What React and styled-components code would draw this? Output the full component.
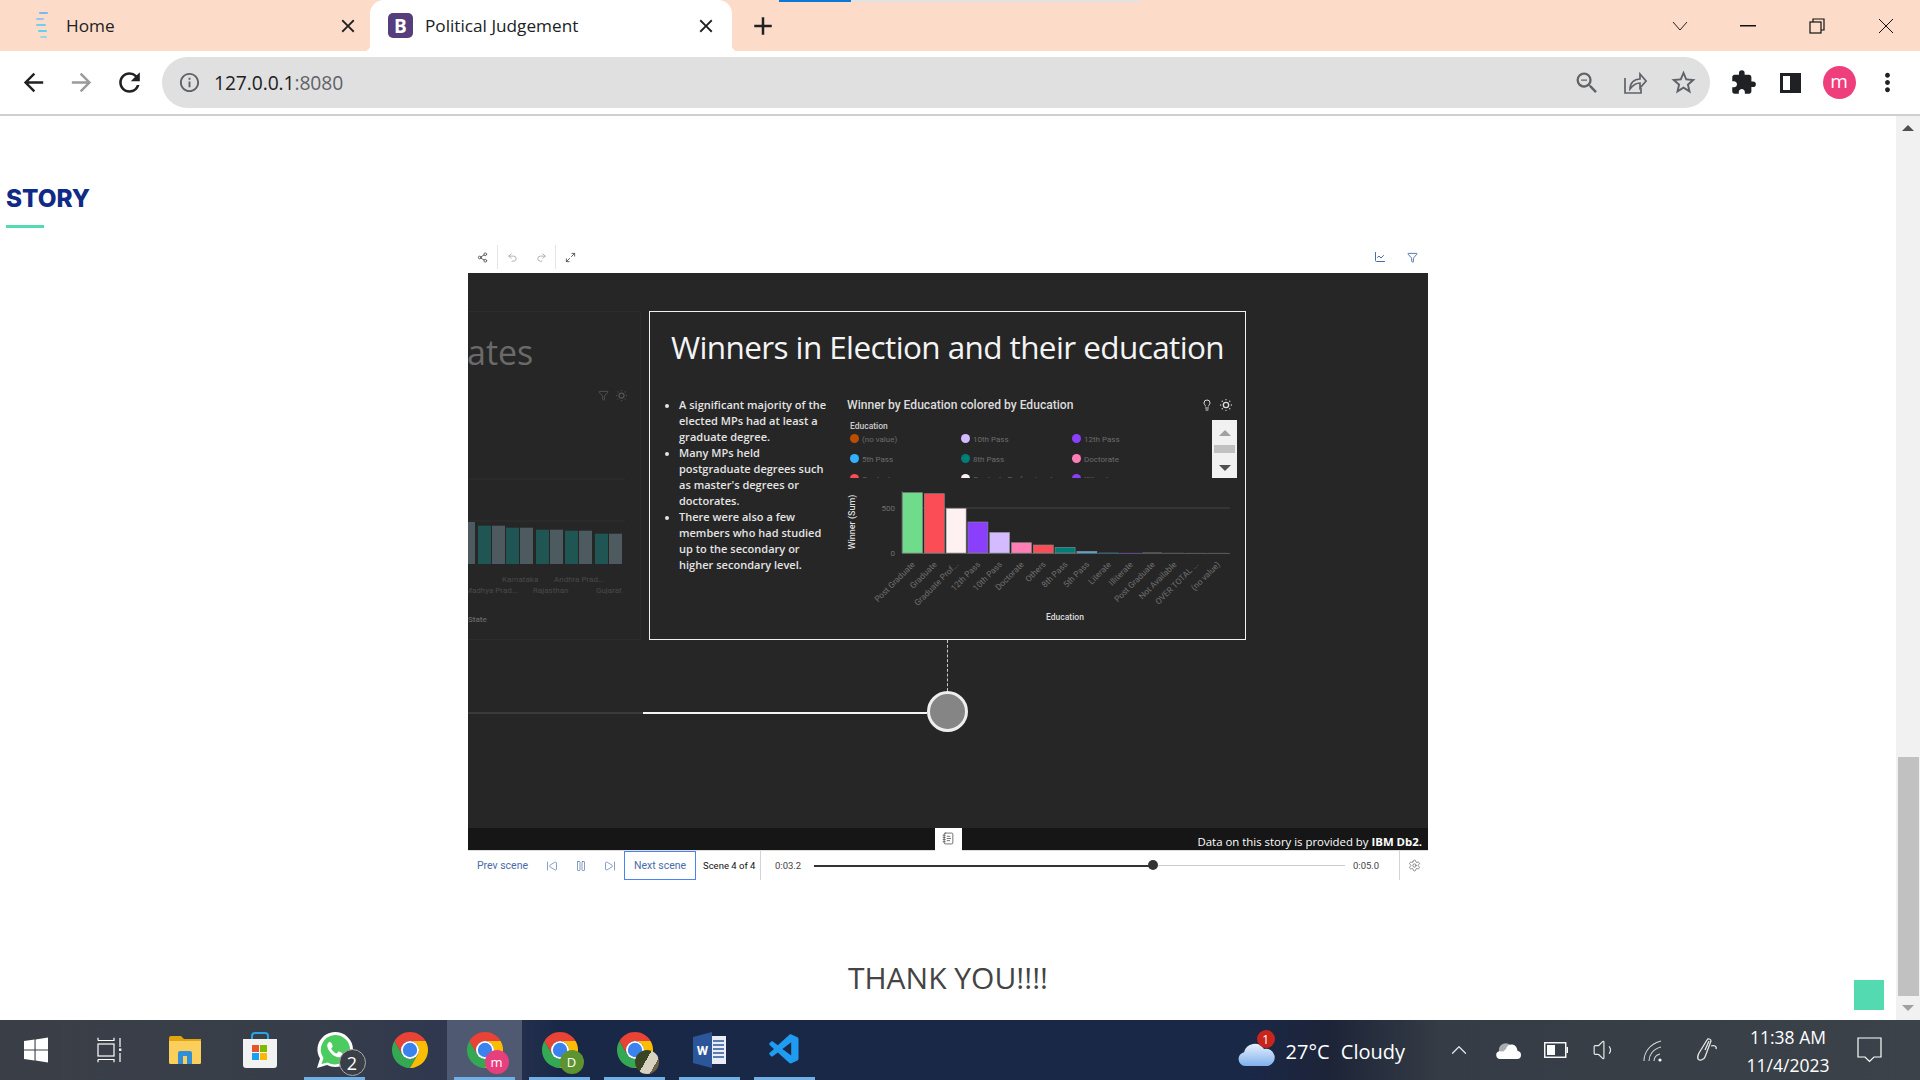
import React from "react";
import styled, { createGlobalStyle } from "styled-components";
import {
  Share2,
  Undo2,
  Redo2,
  Maximize2,
  ChartLine,
  Funnel,
  Lightbulb,
  SunDim,
  NotebookText,
  SkipBack,
  SkipForward,
  Pause,
  Settings,
  ChevronUp,
  Volume1,
} from "lucide-react";
import {
  MdAdd,
  MdArrowBack,
  MdArrowForward,
  MdClose,
  MdExtension,
  MdInfoOutline,
  MdMoreVert,
  MdRefresh,
  MdStarBorder,
  MdZoomOut,
} from "react-icons/md";
import { VscVscode } from "react-icons/vsc";

const GlobalStyle = createGlobalStyle`
  html, body {
    margin: 0;
    padding: 0;
    background: #fff;
    overflow: hidden;
  }
  * { box-sizing: border-box; }
`;

const Screen = styled.div`
  width: 1920px;
  height: 1080px;
  display: flex;
  flex-direction: column;
  font-family: "Open Sans", "Liberation Sans", sans-serif;
  overflow: hidden;
`;

/* browser chrome */
const TabStrip = styled.div`
  height: 51px;
  flex: none;
  display: flex;
  align-items: stretch;
  background: #fcdcc8;
  position: relative;
`;

const LoadBar = styled.div`
  position: absolute;
  top: 0;
  left: 779px;
  width: 362px;
  height: 2px;
  background: linear-gradient(90deg, #0a78d4 0 72px, #e2e2e2 72px);
`;

const Tab = styled.div`
  width: ${(p) => (p.$active ? "362px" : "370px")};
  position: relative;
  display: flex;
  align-items: center;
  gap: ${(p) => (p.$active ? "12px" : "16px")};
  padding: ${(p) => (p.$active ? "0 15px 0 18px" : "0 11px 0 34px")};
  background: ${(p) => (p.$active ? "#fff" : "transparent")};
  border-radius: 14px 14px 0 0;
  font-size: 17.2px;
  color: #202124;

  &::before,
  &::after {
    content: "";
    display: ${(p) => (p.$active ? "block" : "none")};
    position: absolute;
    bottom: 0;
    width: 6px;
    height: 6px;
  }
  &::before {
    left: -6px;
    background: radial-gradient(circle at 0 0, transparent 6px, #fff 6.5px);
  }
  &::after {
    right: -6px;
    background: radial-gradient(circle at 100% 0, transparent 6px, #fff 6.5px);
  }
`;

const TabLabel = styled.span`
  flex: 1;
  white-space: nowrap;
`;

const Favicon = styled.div`
  width: 25px;
  height: 25px;
  border-radius: 5px;
  background: #563d7c;
  color: #fff;
  font-weight: 700;
  font-size: 19px;
  display: flex;
  align-items: center;
  justify-content: center;
`;

const NewTab = styled.div`
  width: 62px;
  display: flex;
  align-items: center;
  justify-content: center;
  color: #202124;
`;

const WindowButtons = styled.div`
  margin-left: auto;
  display: flex;
  align-items: center;
`;

const WindowButton = styled.div`
  width: 68.7px;
  height: 42px;
  display: flex;
  align-items: center;
  justify-content: center;
`;

const Toolbar = styled.div`
  height: 65px;
  flex: none;
  display: flex;
  align-items: flex-start;
  padding-top: 6px;
  background: #fff;
  border-bottom: 2px solid #d0d0d0;
`;

const NavButton = styled.div`
  width: 48px;
  height: 51px;
  display: flex;
  align-items: center;
  justify-content: center;
  color: ${(p) => p.$color || "#202124"};
`;

const NavGroup = styled.div`
  width: 162px;
  display: flex;
  padding-left: 9px;
`;

const AddressBar = styled.div`
  width: 1548px;
  height: 51px;
  margin-right: 9px;
  border-radius: 26px;
  background: #e0e0e0;
  display: flex;
  align-items: center;
  padding: 0 3px 0 16px;
  color: #5f6368;
`;

const Url = styled.div`
  margin-left: 13px;
  flex: 1;
  font-size: 19.3px;
  letter-spacing: -0.1px;
  color: #202124;
  span { color: #5f6368; }
`;

const AddressAction = styled.div`
  width: 48px;
  display: flex;
  justify-content: center;
`;

const Avatar = styled.div`
  width: 33px;
  height: 33px;
  border-radius: 50%;
  background: #ee3f7c;
  color: #fff;
  font-size: 19px;
  display: flex;
  align-items: center;
  justify-content: center;
  padding-bottom: 3px;
`;

/* page */
const Main = styled.div`
  flex: 1;
  min-height: 0;
  display: flex;
  position: relative;
  background: #fff;
`;

const Content = styled.div`
  flex: 1;
  min-width: 0;
  padding-top: 67px;
`;

const Heading = styled.h2`
  margin: 0;
  padding-left: 6px;
  font-family: Inter, "Open Sans", sans-serif;
  font-size: 24.3px;
  line-height: 30px;
  font-weight: 800;
  color: #0f2a87;
`;

const HeadingRule = styled.div`
  width: 38px;
  height: 3px;
  margin: 12px 0 17px 6px;
  background: #53dab0;
`;

const StoryWidget = styled.div`
  width: 960px;
  margin: 0 auto;
`;

const StoryBar = styled.div`
  height: 28px;
  display: flex;
  align-items: stretch;
  padding-bottom: 4px;
  color: #4a6ba8;
`;

const BarIcon = styled.div`
  width: ${(p) => p.$w || 29}px;
  display: flex;
  align-items: center;
  justify-content: center;
  color: ${(p) => p.$color || "#555"};
  border-right: ${(p) => (p.$divider ? "1px solid #e4e4e4" : "none")};
`;

const BarSpacer = styled.div`
  flex: 1;
`;

const Stage = styled.div`
  height: 577px;
  background: #262626;
  display: flex;
  flex-direction: column;
  color: #eee;
  font-family: "Roboto", "Liberation Sans", sans-serif;
`;

const SceneRow = styled.div`
  display: flex;
  gap: 8px;
  padding-top: 38px;
  height: 367px;
`;

const FadedScene = styled.div`
  width: 173px;
  height: 329px;
  flex: none;
  overflow: hidden;
  border: 1px solid #2c2c2c;
  border-left: none;
  color: #6a6a6a;
`;

const FadedTitle = styled.div`
  margin: 19px 0 0 -1px;
  font-family: "Open Sans", sans-serif;
  font-size: 34px;
  line-height: 42px;
`;

const FadedIcons = styled.div`
  display: flex;
  justify-content: flex-end;
  align-items: center;
  gap: 5px;
  height: 16px;
  padding-right: 11px;
  margin-top: 14px;
  color: #555;
`;

const Frame = styled.div`
  width: 597px;
  height: 329px;
  flex: none;
  border: 1px solid #f0f0f0;
  display: flex;
  flex-direction: column;
`;

const SlideTitle = styled.h1`
  margin: 0;
  height: 85px;
  padding-top: 13px;
  text-align: center;
  font-family: "Open Sans", sans-serif;
  font-size: 31.5px;
  line-height: 43px;
  font-weight: 400;
  letter-spacing: -0.6px;
  color: #f4f4f4;
  white-space: nowrap;
`;

const SlideBody = styled.div`
  display: flex;
  flex: 1;
`;

const Bullets = styled.ul`
  width: 197px;
  flex: none;
  margin: 0;
  padding: 0 0 0 29px;
  font-family: "Open Sans", sans-serif;
  font-size: 11px;
  line-height: 16px;
  font-weight: 600;
  letter-spacing: 0.02px;
  color: #e4e4e4;
  white-space: nowrap;
  li::marker { font-size: 10px; }
`;

const ChartColumn = styled.div`
  flex: 1;
  min-width: 0;
  position: relative;
`;

const ChartHeader = styled.div`
  height: 16px;
  display: flex;
  align-items: center;
  justify-content: space-between;
  padding-right: 11px;
  font-size: 12.1px;
  font-weight: 500;
  color: #dcdcdc;
  white-space: nowrap;
`;

const ChartTools = styled.div`
  display: flex;
  align-items: center;
  gap: 5px;
  color: #ddd;
`;

const LegendArea = styled.div`
  height: 58px;
  margin: 7px 8px 0 3px;
  display: flex;
  overflow: hidden;
`;

const LegendBody = styled.div`
  flex: 1;
  padding-top: 1px;
`;

const LegendTitle = styled.div`
  font-size: 8.5px;
  line-height: 11px;
  font-weight: 500;
  color: #ccc;
  height: 9px;
`;

const LegendGrid = styled.div`
  display: grid;
  grid-template-columns: repeat(3, 111px);
  grid-auto-rows: 19.7px;
  align-items: center;
`;

const LegendItem = styled.div`
  display: flex;
  align-items: center;
  gap: 3px;
  font-size: 8px;
  color: #6c6c6c;
  white-space: nowrap;
`;

const LegendDot = styled.span`
  width: 9px;
  height: 9px;
  border-radius: 50%;
  background: ${(p) => p.$color};
  position: relative;
  top: -1px;
`;

const LegendScroll = styled.div`
  width: 25px;
  flex: none;
  background: #f1f1f1;
  display: flex;
  flex-direction: column;
  align-items: center;
  padding-top: 10px;
`;

const ScrollArrow = styled.div`
  width: 0;
  height: 0;
  border-left: 6px solid transparent;
  border-right: 6px solid transparent;
  border-bottom: ${(p) => (p.$down ? "none" : `6px solid ${p.$color}`)};
  border-top: ${(p) => (p.$down ? `6px solid ${p.$color}` : "none")};
`;

const ScrollNub = styled.div`
  width: 21px;
  height: 8px;
  margin: 9px 0 12px;
  background: #c1c1c1;
`;

const Connector = styled.div`
  height: 51px;
  margin-left: 479px;
  border-left: 1px dashed #c8c8c8;
`;

const TimelineRow = styled.div`
  display: flex;
  align-items: center;
  height: 41px;
`;

const TimelineSegment = styled.div`
  width: ${(p) => p.$w}px;
  height: 2px;
  margin-top: 3px;
  background: ${(p) => p.$color};
`;

const TimelineNode = styled.div`
  width: 41px;
  height: 41px;
  border-radius: 50%;
  border: 3px solid #eee;
  background: #858585;
`;

const StageFooter = styled.div`
  margin-top: auto;
  height: 22px;
  background: #161616;
  display: grid;
  grid-template-columns: 1fr 27px 1fr;
`;

const NoteButton = styled.div`
  grid-column: 2;
  background: #fff;
  color: #555;
  display: flex;
  align-items: center;
  justify-content: center;
  padding-bottom: 4px;
`;

const Credit = styled.div`
  grid-column: 3;
  text-align: right;
  padding: 3px 6px 0 0;
  font-family: "Open Sans", sans-serif;
  font-size: 11.4px;
  line-height: 21px;
  color: #fff;
  white-space: nowrap;
  b { font-weight: 700; }
`;

const Controls = styled.div`
  height: 30px;
  display: flex;
  align-items: stretch;
  border-top: 1px solid #ddd;
  font-family: "Roboto", "Liberation Sans", sans-serif;
  font-size: 10.5px;
`;

const SceneLink = styled.div`
  display: flex;
  align-items: center;
  justify-content: center;
  width: ${(p) => p.$w}px;
  color: #4a6ba8;
  border: ${(p) => (p.$focus ? "1px solid #4a84f0" : "1px solid transparent")};
`;

const SceneCount = styled.div`
  width: 64px;
  padding-left: 7px;
  display: flex;
  align-items: center;
  font-size: 9.5px;
  color: #111;
  white-space: nowrap;
`;

const TimeStamp = styled.div`
  width: ${(p) => p.$w}px;
  flex: none;
  display: flex;
  align-items: center;
  padding-left: ${(p) => p.$pad}px;
  border-left: ${(p) => (p.$divider ? "1px solid #d4d4d4" : "none")};
  font-size: 9.5px;
  color: #444;
`;

const SliderTrack = styled.div`
  flex: 1;
  display: flex;
  align-items: center;
`;

const Slider = styled.div`
  width: 100%;
  height: 1px;
  background: #ccc;
  position: relative;
`;

const SliderFill = styled.div`
  position: absolute;
  left: 0;
  top: -0.5px;
  height: 2px;
  background: #333;
`;

const SliderKnob = styled.div`
  position: absolute;
  top: -5px;
  width: 10px;
  height: 10px;
  margin-left: -5px;
  border-radius: 50%;
  background: #333;
`;

const GearCell = styled.div`
  width: 29px;
  border-left: 1px solid #d4d4d4;
  display: flex;
  align-items: center;
  justify-content: center;
  color: #666;
`;

const ThankYou = styled.div`
  margin-top: 80px;
  text-align: center;
  font-size: 30px;
  line-height: 36px;
  color: #444;
`;

const BackToTop = styled.div`
  position: absolute;
  right: 36px;
  bottom: 10px;
  width: 30px;
  height: 30px;
  background: #53dab0;
`;

const PageScroll = styled.div`
  width: 24px;
  flex: none;
  background: #f1f1f1;
  display: flex;
  flex-direction: column;
  align-items: center;
`;

const PageArrow = styled.div`
  height: 24px;
  flex: none;
  display: flex;
  align-items: center;
  justify-content: center;
`;

const PageThumb = styled.div`
  width: 21px;
  height: 239px;
  margin-top: auto;
  background: #c1c1c1;
`;

/* taskbar */
const Taskbar = styled.div`
  height: 60px;
  flex: none;
  display: flex;
  align-items: stretch;
  background: linear-gradient(
    90deg,
    #3a3f47 0,
    #383e49 300px,
    #2c3650 480px,
    #1a2848 560px,
    #1a2848 1240px,
    #1d2438 1330px,
    #353c45 1440px,
    #3b4249 1920px
  );
  color: #fff;
`;

const TaskCell = styled.div`
  width: ${(p) => p.$w || 75}px;
  flex: none;
  display: flex;
  align-items: center;
  justify-content: center;
  position: relative;
  background: ${(p) => (p.$active ? "#4f5a72" : "transparent")};
  &::after {
    content: "";
    position: absolute;
    bottom: 0;
    left: 7px;
    right: 7px;
    height: 3px;
    background: #6fb0e6;
    display: ${(p) => (p.$open ? "block" : "none")};
  }
`;

const IconStack = styled.div`
  width: 36px;
  height: 36px;
  position: relative;
`;

const IconBadge = styled.div`
  position: absolute;
  right: ${(p) => p.$right ?? -4}px;
  bottom: ${(p) => p.$bottom ?? -4}px;
  width: ${(p) => p.$size || 24}px;
  height: ${(p) => p.$size || 24}px;
  border-radius: 50%;
  background: ${(p) => p.$color};
  border: ${(p) => (p.$ring ? "1px solid #aaa" : "none")};
  color: #fff;
  font-size: ${(p) => p.$font || 14}px;
  display: flex;
  align-items: center;
  justify-content: center;
`;

const Weather = styled.div`
  margin-left: auto;
  display: flex;
  align-items: center;
  gap: 11px;
  padding-top: 2px;
  font-size: 20px;
  white-space: nowrap;
  word-spacing: 6px;
`;

const CloudIcon = styled.div`
  width: 37px;
  height: 30px;
  position: relative;
`;

const WeatherBadge = styled.div`
  position: absolute;
  top: -6px;
  right: 0;
  width: 18px;
  height: 18px;
  border-radius: 50%;
  background: #c8261c;
  font-size: 12px;
  color: #fff;
  display: flex;
  align-items: center;
  justify-content: center;
`;

const Tray = styled.div`
  display: flex;
  align-items: center;
  margin-left: 30px;
`;

const TrayIcon = styled.div`
  width: 48.5px;
  display: flex;
  justify-content: center;
  padding-left: ${(p) => p.$shift || 0}px;
`;

const Clock = styled.div`
  width: 112px;
  padding-top: 2px;
  margin: auto 0 auto 6px;
  text-align: center;
  font-size: 17.5px;
  line-height: 28px;
  white-space: nowrap;
`;

const NotifyCell = styled.div`
  width: 76px;
  display: flex;
  align-items: center;
  padding-left: 13px;
`;

const COLORS = {
  green: "#6fdc8c",
  red: "#fa4d56",
  blush: "#fff1f1",
  violet: "#8a3ffc",
  lilac: "#d4bbff",
  pink: "#ff7eb6",
  teal: "#007d79",
  blue: "#33b1ff",
  orange: "#ba4e00",
};

const LEGEND = [
  ["(no value)", COLORS.orange],
  ["10th Pass", COLORS.lilac],
  ["12th Pass", COLORS.violet],
  ["5th Pass", COLORS.blue],
  ["8th Pass", COLORS.teal],
  ["Doctorate", COLORS.pink],
  ["Graduate", COLORS.red],
  ["Graduate Professional", COLORS.blush],
  ["Illiterate", COLORS.violet],
];

const EDUCATION_BARS = [
  ["Post Graduate", 493.7, COLORS.green],
  ["Graduate", 494.7, COLORS.red],
  ["Graduate Prof...", 509.3, COLORS.blush],
  ["12th Pass", 523, COLORS.violet],
  ["10th Pass", 533.3, COLORS.lilac],
  ["Doctorate", 543.7, COLORS.pink],
  ["Others", 546, COLORS.red],
  ["8th Pass", 548.3, COLORS.teal],
  ["5th Pass", 552.3, COLORS.blue],
  ["Literate", 553, "#1c4e68"],
  ["Illiterate", 553.4, "#491d8b"],
  ["Post Graduate", 553.4, "#6f6f6f"],
  ["Not Available", 553.7, "#555"],
  ["OVER TOTAL ...", 553.8, "#555"],
  ["(no value)", 553.8, "#555"],
];

// tops of the grey/teal pairs in the scene that is sliding out
const FADED_BARS = [
  [478, 524.7],
  [506, 526.7],
  [536, 528.7],
  [565, 529.7],
  [595, 532.7],
];

const PLAYED = 0.638;

function EducationChart() {
  return (
    <svg width="395" height="155" viewBox="845 478 395 155" style={{ display: "block", margin: "-1px 0 0 -1px" }}>
      <line x1="901" x2="1229" y1="509" y2="509" stroke="#444" />
      <line x1="901" x2="1229" y1="554.5" y2="554.5" stroke="#555" />
      <line x1="901" x2="901" y1="492" y2="554" stroke="#555" />
      {EDUCATION_BARS.map(([label, top, fill], i) => {
        const x = 901.5 + i * 21.8;
        const tickX = x + 13;
        return (
          <g key={i}>
            <rect x={x} y={top} width="20" height={554 - top} fill={fill} stroke={top < 553 ? "#8a8a8a" : "none"} strokeWidth="0.6" />
            <text
              x={tickX}
              y="566"
              textAnchor="end"
              transform={`rotate(-45 ${tickX} 566)`}
              fontSize="8.4"
              fontFamily="Roboto, sans-serif"
              fill="#707070"
            >
              {label}
            </text>
          </g>
        );
      })}
      <text x="894" y="512" textAnchor="end" fontSize="8" fill="#707070" fontFamily="Roboto, sans-serif">500</text>
      <text x="894" y="557" textAnchor="end" fontSize="8" fill="#707070" fontFamily="Roboto, sans-serif">0</text>
      <text x="1064" y="621" textAnchor="middle" fontSize="8.5" fontWeight="500" fill="#ddd" fontFamily="Roboto, sans-serif">Education</text>
      <text
        x="854"
        y="523"
        textAnchor="middle"
        transform="rotate(-90 854 523)"
        fontSize="9"
        fontWeight="500"
        fill="#ddd"
        fontFamily="Roboto, sans-serif"
      >
        Winner (Sum)
      </text>
    </svg>
  );
}

function FadedChart() {
  return (
    <svg width="173" height="165" viewBox="468 470 173 165" style={{ display: "block", marginTop: 68 }}>
      <line x1="468" x2="625" y1="478" y2="478" stroke="#2e2e2e" />
      <line x1="468" x2="625" y1="520" y2="520" stroke="#2e2e2e" />
      <rect x="465" y="521" width="10" height="42" fill="#4d5a60" />
      {FADED_BARS.map(([x, top]) => (
        <g key={x}>
          <rect x={x} y={top} width="13" height={563 - top} fill="#1f5654" />
          <rect x={x + 14} y={top} width="13" height={563 - top} fill="#4d5a60" />
        </g>
      ))}
      <g fontSize="8" fill="#4a4a4a" fontFamily="Roboto, sans-serif">
        <text x="502" y="581">Karnataka</text>
        <text x="554" y="581">Andhra Prad...</text>
        <text x="465" y="592">Madhya Prad...</text>
        <text x="533" y="592">Rajasthan</text>
        <text x="596" y="592">Gujarat</text>
      </g>
      <text x="468" y="621" fontSize="8" fontWeight="500" fill="#666" fontFamily="Roboto, sans-serif">State</text>
    </svg>
  );
}

function ChromeLogo({ size = 36 }) {
  return (
    <svg width={size} height={size} viewBox="4 4 40 40">
      <path d="M6.68 14A20 20 0 0 1 41.32 14H24a10 10 0 0 0-8.66 15z" fill="#ea4335" />
      <path d="M6.68 14L15.34 29A10 10 0 0 0 32.66 29L24 44A20 20 0 0 1 6.68 14z" fill="#34a853" />
      <path d="M41.32 14H24a10 10 0 0 1 8.66 15L24 44A20 20 0 0 0 41.32 14z" fill="#fbbc04" />
      <circle cx="24" cy="24" r="10" fill="#fff" />
      <circle cx="24" cy="24" r="8" fill="#3a82ee" />
    </svg>
  );
}

function WindowsLogo() {
  return (
    <svg width="26" height="26" viewBox="0 0 26 26" fill="#fff">
      <polygon points="1,4 11.5,2.6 11.5,12.4 1,12.4" />
      <polygon points="12.6,2.4 25,0.6 25,12.4 12.6,12.4" />
      <polygon points="1,13.6 11.5,13.6 11.5,23.4 1,22" />
      <polygon points="12.6,13.6 25,13.6 25,25.4 12.6,23.6" />
    </svg>
  );
}

function TaskViewIcon() {
  return (
    <svg width="26" height="26" viewBox="0 0 26 26" fill="none" stroke="#fff" strokeWidth="1.2">
      <path d="M1 3.5V.8M1 3.5H17V.8M1 22.5v2.7M1 22.5H17v2.7" />
      <rect x="1" y="7" width="16" height="12" />
      <path d="M23 1v9M23 16v9" />
      <rect x="22" y="11.5" width="2.4" height="2.4" fill="#fff" stroke="none" />
    </svg>
  );
}

function FolderIcon() {
  return (
    <svg width="34" height="30" viewBox="0 0 34 30">
      <path d="M1 3a2 2 0 0 1 2-2h10l3 3H1z" fill="#e2a510" />
      <rect x="1" y="4" width="32" height="25" rx="1.5" fill="#fbcf5b" />
      <rect x="1" y="4" width="32" height="2" fill="#e2a510" />
      <path d="M10 29V18a2 2 0 0 1 2-2h10a2 2 0 0 1 2 2v11h-5v-8h-4v8z" fill="#2f8fd8" />
    </svg>
  );
}

function StoreIcon() {
  return (
    <svg width="36" height="36" viewBox="0 0 36 36">
      <path d="M10 8V4a3 3 0 0 1 3-3h10a3 3 0 0 1 3 3v4" fill="none" stroke="#27a4e8" strokeWidth="2" />
      <path d="M1 7h34v26a3 3 0 0 1-3 3H4a3 3 0 0 1-3-3z" fill="#f2f2f2" />
      <rect x="10" y="13" width="7" height="7" fill="#e8532a" />
      <rect x="18" y="13" width="7" height="7" fill="#7fba00" />
      <rect x="10" y="21" width="7" height="7" fill="#19a0ee" />
      <rect x="18" y="21" width="7" height="7" fill="#fbb900" />
    </svg>
  );
}

function WhatsAppIcon() {
  return (
    <svg width="36" height="36" viewBox="0 0 36 36">
      <path d="M18 0a18 17.5 0 0 1 0 35 18 18 0 0 1-8-2L0 36l3-9.5A18 17.5 0 0 1 18 0z" fill="#fff" />
      <path d="M18 3a15 14.7 0 0 1 0 29.4 15 15 0 0 1-7.5-2L4.5 32l2-6A15 14.7 0 0 1 18 3z" fill="#4ccb60" />
      <path
        d="M12.6 9.8c-1 .3-2.6 2-2.4 4.2.3 3 2.6 6.3 5.1 8.4 2.6 2.1 5.6 3.3 7.5 2.8 1.7-.5 3-1.9 3-3.3 0-.7-3.6-2.5-4.3-2.3-.6.2-1.2 1.8-1.8 1.9-1.4.1-5.2-3.4-5.4-5 0-.6 1.3-1.4 1.4-2 .1-.7-1.5-4.9-3.1-4.7z"
        fill="#fff"
      />
    </svg>
  );
}

function WordIcon() {
  return (
    <svg width="34" height="36" viewBox="0 0 34 36">
      <rect x="12" y="4" width="21" height="28" fill="#e8edf6" />
      <g stroke="#2b579a" strokeWidth="1.4">
        <path d="M20 9h11M20 13h11M20 17h11M20 21h11M20 25h11" />
      </g>
      <path d="M0 5l19-5v36L0 31z" fill="#2b579a" />
      <text x="9.5" y="23" textAnchor="middle" fontSize="13" fontWeight="700" fill="#fff" fontFamily="Roboto, sans-serif">W</text>
    </svg>
  );
}

function OneDriveIcon() {
  return (
    <svg width="26" height="18" viewBox="0 0 26 18">
      <path d="M4 11a7 7 0 0 1 13-5 5 5 0 0 1 6 4H10z" fill="#a8adb2" />
      <path d="M5 18a4 4 0 0 1-1-7.8h4.5L11 8a5 5 0 0 1 11 2 4 4 0 0 1 0 8z" fill="#fff" />
    </svg>
  );
}

function BatteryIcon() {
  return (
    <svg width="24" height="18" viewBox="0 0 24 18" fill="none">
      <rect x="0.75" y="1.75" width="21" height="14.5" stroke="#fff" strokeWidth="1.4" />
      <rect x="3" y="4" width="8" height="10" fill="#fff" />
      <rect x="22.5" y="6" width="1.5" height="6" fill="#fff" />
    </svg>
  );
}

function SignalIcon() {
  return (
    <svg width="20" height="26" viewBox="0 0 20 26" fill="none" stroke="#d5d8da" strokeWidth="1.1">
      <path d="M1 24C1 15 7 7 18 4" />
      <path d="M6 24C6 18 10 12 18 10" />
      <path d="M11 24c0-3 2-6 6-7" />
      <circle cx="17" cy="23" r="1.6" fill="#fff" stroke="none" />
    </svg>
  );
}

function PenIcon() {
  return (
    <svg width="22" height="26" viewBox="0 0 22 26" fill="none" stroke="#e8e8e8" strokeWidth="1.3">
      <path d="M3 16L11 3c1-2 4-1 4 1L9 20c-1 3-6 4-7 2s0-4 1-6z" />
      <path d="M9 13l4-9M15 9c3-1 6 0 5 3" />
    </svg>
  );
}

export default function App() {
  return (
    <Screen>
      <GlobalStyle />
      <TabStrip>
        <LoadBar />
        <Tab>
          <svg width="16" height="36" viewBox="0 0 16 36" fill="none" strokeWidth="2" strokeLinecap="round">
            <path d="M6 5h7" stroke="#7cb7ee" />
            <path d="M3 11h6" stroke="#93c8ec" />
            <path d="M3 17h8" stroke="#6ecfee" />
            <path d="M5 23h7" stroke="#5fd2ee" />
            <path d="M7 29h5" stroke="#9bd4ea" />
          </svg>
          <TabLabel>Home</TabLabel>
          <MdClose size={22} />
        </Tab>
        <Tab $active>
          <Favicon>B</Favicon>
          <TabLabel>Political Judgement</TabLabel>
          <MdClose size={22} />
        </Tab>
        <NewTab>
          <MdAdd size={30} />
        </NewTab>
        <WindowButtons>
          <WindowButton>
            <svg width="16" height="10" viewBox="0 0 16 10" fill="none" stroke="#222" strokeWidth="1">
              <path d="M1 1l7 8 7-8" />
            </svg>
          </WindowButton>
          <WindowButton>
            <svg width="16" height="2" viewBox="0 0 16 2">
              <rect width="16" height="1.5" fill="#111" />
            </svg>
          </WindowButton>
          <WindowButton>
            <svg width="16" height="16" viewBox="0 0 16 16" fill="none" stroke="#111" strokeWidth="1.2">
              <rect x="1" y="4" width="11" height="11" />
              <path d="M4 4V1h11v11h-3" />
            </svg>
          </WindowButton>
          <WindowButton>
            <svg width="16" height="16" viewBox="0 0 16 16" fill="none" stroke="#111" strokeWidth="1">
              <path d="M1 1l14 14M15 1L1 15" />
            </svg>
          </WindowButton>
        </WindowButtons>
      </TabStrip>

      <Toolbar>
        <NavGroup>
          <NavButton>
            <MdArrowBack size={29} />
          </NavButton>
          <NavButton $color="#9a9a9a">
            <MdArrowForward size={29} />
          </NavButton>
          <NavButton>
            <MdRefresh size={31} />
          </NavButton>
        </NavGroup>
        <AddressBar>
          <MdInfoOutline size={23} />
          <Url>
            127.0.0.1<span>:8080</span>
          </Url>
          <AddressAction>
            <MdZoomOut size={28} />
          </AddressAction>
          <AddressAction>
            <svg width="24" height="24" viewBox="0 0 24 24" fill="none" stroke="#5f6368" strokeWidth="1.7">
              <path d="M2 7v15h16v-5" />
              <path d="M7 18c0-6 4-10 10-10V3l6 7-6 7v-5c-4 0-7 2-10 6z" />
            </svg>
          </AddressAction>
          <AddressAction>
            <MdStarBorder size={29} />
          </AddressAction>
        </AddressBar>
        <NavButton>
          <MdExtension size={27} />
        </NavButton>
        <NavButton>
          <svg width="22" height="22" viewBox="0 0 22 22">
            <path d="M0 1h21v20H0z M3 4v14h7V4z" fill="#202124" fillRule="evenodd" />
          </svg>
        </NavButton>
        <NavButton>
          <Avatar>m</Avatar>
        </NavButton>
        <NavButton>
          <MdMoreVert size={29} />
        </NavButton>
      </Toolbar>

      <Main>
        <Content>
          <Heading>STORY</Heading>
          <HeadingRule />
          <StoryWidget>
            <StoryBar>
              <BarIcon $w={30} $divider>
                <Share2 size={11} />
              </BarIcon>
              <BarIcon $color="#aaa">
                <Undo2 size={11} />
              </BarIcon>
              <BarIcon $color="#aaa" $divider>
                <Redo2 size={11} />
              </BarIcon>
              <BarIcon>
                <Maximize2 size={11} />
              </BarIcon>
              <BarSpacer />
              <BarIcon $w={32} $color="#4a6ba8">
                <ChartLine size={12} />
              </BarIcon>
              <BarIcon $w={32} $color="#4a6ba8">
                <Funnel size={11} />
              </BarIcon>
            </StoryBar>
            <Stage>
              <SceneRow>
                <FadedScene>
                  <FadedTitle>ates</FadedTitle>
                  <FadedIcons>
                    <Funnel size={11} />
                    <SunDim size={15} />
                  </FadedIcons>
                  <FadedChart />
                </FadedScene>
                <Frame>
                  <SlideTitle>Winners in Election and their education</SlideTitle>
                  <SlideBody>
                    <Bullets>
                      <li>
                        A significant majority of the
                        <br />
                        elected MPs had at least a
                        <br />
                        graduate degree.
                      </li>
                      <li>
                        Many MPs held
                        <br />
                        postgraduate degrees such
                        <br />
                        as master's degrees or
                        <br />
                        doctorates.
                      </li>
                      <li>
                        There were also a few
                        <br />
                        members who had studied
                        <br />
                        up to the secondary or
                        <br />
                        higher secondary level.
                      </li>
                    </Bullets>
                    <ChartColumn>
                      <ChartHeader>
                        Winner by Education colored by Education
                        <ChartTools>
                          <Lightbulb size={12} />
                          <SunDim size={16} />
                        </ChartTools>
                      </ChartHeader>
                      <LegendArea>
                        <LegendBody>
                          <LegendTitle>Education</LegendTitle>
                          <LegendGrid>
                            {LEGEND.map(([label, color]) => (
                              <LegendItem key={label}>
                                <LegendDot $color={color} />
                                {label}
                              </LegendItem>
                            ))}
                          </LegendGrid>
                        </LegendBody>
                        <LegendScroll>
                          <ScrollArrow $color="#a0a0a0" />
                          <ScrollNub />
                          <ScrollArrow $down $color="#505050" />
                        </LegendScroll>
                      </LegendArea>
                      <EducationChart />
                    </ChartColumn>
                  </SlideBody>
                </Frame>
              </SceneRow>
              <Connector />
              <TimelineRow>
                <TimelineSegment $w={175} $color="#3a3a3a" />
                <TimelineSegment $w={284} $color="#f4f4f4" />
                <TimelineNode />
              </TimelineRow>
              <StageFooter>
                <NoteButton>
                  <NotebookText size={13} strokeWidth={1.5} />
                </NoteButton>
                <Credit>
                  Data on this story is provided by <b>IBM Db2.</b>
                </Credit>
              </StageFooter>
            </Stage>
            <Controls>
              <SceneLink $w={69}>Prev scene</SceneLink>
              <BarIcon $color="#4a6ba8">
                <SkipBack size={12} strokeWidth={1.3} />
              </BarIcon>
              <BarIcon $color="#4a6ba8">
                <Pause size={12} strokeWidth={1.3} />
              </BarIcon>
              <BarIcon $color="#4a6ba8">
                <SkipForward size={12} strokeWidth={1.3} />
              </BarIcon>
              <SceneLink $w={72} $focus>
                Next scene
              </SceneLink>
              <SceneCount>Scene 4 of 4</SceneCount>
              <TimeStamp $w={54} $pad={14} $divider>
                0:03.2
              </TimeStamp>
              <SliderTrack>
                <Slider>
                  <SliderFill style={{ width: `${PLAYED * 100}%` }} />
                  <SliderKnob style={{ left: `${PLAYED * 100}%` }} />
                </Slider>
              </SliderTrack>
              <TimeStamp $w={54} $pad={8}>
                0:05.0
              </TimeStamp>
              <GearCell>
                <Settings size={13} strokeWidth={1.4} />
              </GearCell>
            </Controls>
          </StoryWidget>
          <ThankYou>THANK YOU!!!!</ThankYou>
        </Content>
        <PageScroll>
          <PageArrow>
            <ScrollArrow $color="#505050" />
          </PageArrow>
          <PageThumb />
          <PageArrow>
            <ScrollArrow $down $color="#a0a0a0" />
          </PageArrow>
        </PageScroll>
        <BackToTop />
      </Main>

      <Taskbar>
        <TaskCell $w={72}>
          <WindowsLogo />
        </TaskCell>
        <TaskCell>
          <TaskViewIcon />
        </TaskCell>
        <TaskCell>
          <FolderIcon />
        </TaskCell>
        <TaskCell>
          <StoreIcon />
        </TaskCell>
        <TaskCell $open>
          <IconStack>
            <WhatsAppIcon />
            <IconBadge $color="#3a3f47" $ring $size={27} $right={-13} $bottom={-8} $font={18}>
              2
            </IconBadge>
          </IconStack>
        </TaskCell>
        <TaskCell>
          <ChromeLogo />
        </TaskCell>
        <TaskCell $active $open>
          <IconStack>
            <ChromeLogo />
            <IconBadge $color="#e73f7e" $right={-6} $bottom={-6} $font={13}>
              m
            </IconBadge>
          </IconStack>
        </TaskCell>
        <TaskCell $open>
          <IconStack>
            <ChromeLogo />
            <IconBadge $color="#5e9331" $right={-6} $bottom={-6} $font={13}>
              D
            </IconBadge>
          </IconStack>
        </TaskCell>
        <TaskCell $open>
          <IconStack>
            <ChromeLogo />
            <IconBadge $color="linear-gradient(120deg, #3a4526 0 45%, #d8d2c0 45% 75%, #6d6148 75%)" $right={-6} $bottom={-6} $font={1} />
          </IconStack>
        </TaskCell>
        <TaskCell $open>
          <WordIcon />
        </TaskCell>
        <TaskCell $open>
          <VscVscode size={36} color="#1f9cf0" />
        </TaskCell>
        <Weather>
          <CloudIcon>
            <svg width="37" height="24" viewBox="0 0 37 24" style={{ marginTop: 6 }}>
              <defs>
                <linearGradient id="cloudFill" x1="0" y1="0" x2="0" y2="1">
                  <stop offset="0" stopColor="#e8f0fc" />
                  <stop offset="1" stopColor="#7fb0ec" />
                </linearGradient>
              </defs>
              <path d="M7 24a7 7 0 0 1-1-13.8A11 11 0 0 1 26 7a8.5 8.5 0 0 1 4 17z" fill="url(#cloudFill)" />
            </svg>
            <WeatherBadge>1</WeatherBadge>
          </CloudIcon>
          <span>27°C Cloudy</span>
        </Weather>
        <Tray>
          <TrayIcon>
            <ChevronUp size={26} strokeWidth={1.1} color="#e8e8e8" />
          </TrayIcon>
          <TrayIcon>
            <OneDriveIcon />
          </TrayIcon>
          <TrayIcon>
            <BatteryIcon />
          </TrayIcon>
          <TrayIcon>
            <Volume1 size={26} strokeWidth={1.1} color="#e8e8e8" />
          </TrayIcon>
          <TrayIcon>
            <SignalIcon />
          </TrayIcon>
          <TrayIcon $shift={10}>
            <PenIcon />
          </TrayIcon>
        </Tray>
        <Clock>
          11:38 AM
          <br />
          11/4/2023
        </Clock>
        <NotifyCell>
          <svg width="25" height="26" viewBox="0 0 25 26" fill="none" stroke="#fff" strokeWidth="1.2">
            <path d="M1 1h23v19h-7l-4.5 4.5L8 20H1z" />
          </svg>
        </NotifyCell>
      </Taskbar>
    </Screen>
  );
}
